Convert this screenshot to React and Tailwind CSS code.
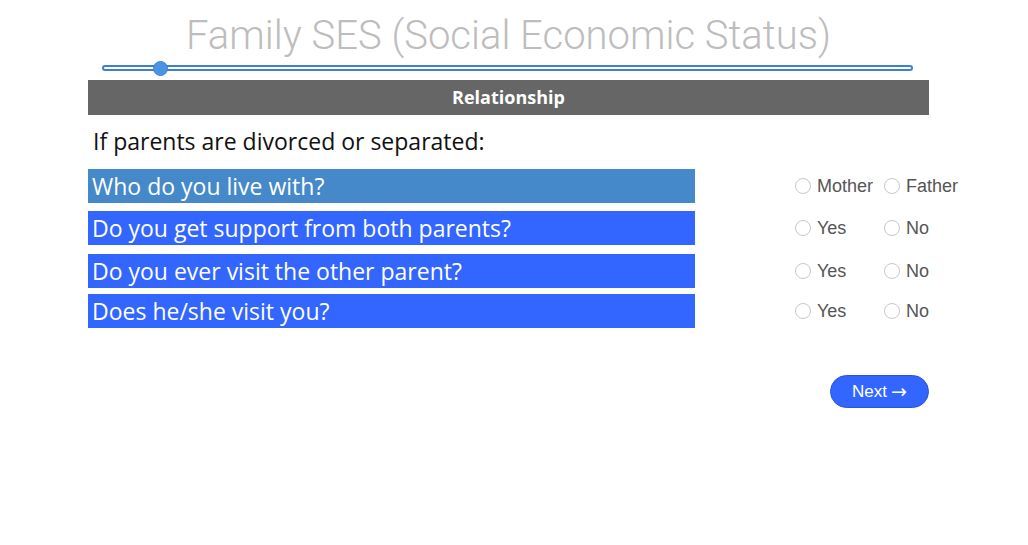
import React from "react";

const questions = [
  { q: "Who do you live with?", opts: ["Mother", "Father"], bg: "bg-[#4589cb]", mt: "" },
  { q: "Do you get support from both parents?", opts: ["Yes", "No"], bg: "bg-[#3366ff]", mt: "mt-[8px]" },
  { q: "Do you ever visit the other parent?", opts: ["Yes", "No"], bg: "bg-[#3366ff]", mt: "mt-[9px]" },
  { q: "Does he/she visit you?", opts: ["Yes", "No"], bg: "bg-[#3366ff]", mt: "mt-[6px]" },
];

function Radio({ label, w }) {
  return (
    <label className={`flex items-center gap-[6px] shrink-0 ${w}`}>
      <span className="w-[16px] h-[16px] rounded-full border border-[#c8c8c8] bg-white shrink-0" />
      <span className="text-[18px] leading-[20px] text-[#555555] font-['Liberation_Sans',Arial,sans-serif]">{label}</span>
    </label>
  );
}

export default function App() {
  return (
    <div className="w-[1028px] h-[545px] bg-white">
      <div className="ml-[88px] w-[841px] flex flex-col">
        <h1 className="mt-[11px] text-center text-[40px] leading-[50px] font-light text-[#bdbdbd] font-['Roboto',sans-serif]">
          Family SES (Social Economic Status)
        </h1>
        <div className="relative w-[811px] h-[6px] mt-[4px] ml-[14px] rounded-full border-2 border-[#3d80d0] bg-white">
          <span className="absolute left-[49px] top-[-6px] w-[15px] h-[15px] rounded-full bg-[#4c93e6] border border-[#3d80d0]" />
        </div>
        <div className="mt-[9px] w-[841px] h-[35px] bg-[#666666] flex items-center justify-center">
          <span className="text-white font-bold text-[18px] font-['Open_Sans',sans-serif]">Relationship</span>
        </div>
        <p className="mt-[11px] ml-[5px] text-[23px] leading-[30px] text-[#111] font-['Open_Sans',sans-serif]">
          If parents are divorced or separated:
        </p>
        <div className="mt-[13px] flex flex-col">
          {questions.map((item, i) => (
            <div key={i} className={`flex items-center ${item.mt}`}>
              <div className={`w-[607px] h-[34px] shrink-0 ${item.bg} flex items-center pl-[4px]`}>
                <span className="text-white text-[23px] font-['Open_Sans',sans-serif]">{item.q}</span>
              </div>
              <div className="ml-[100px] flex items-center">
                <Radio label={item.opts[0]} w="w-[89px]" />
                <Radio label={item.opts[1]} w="" />
              </div>
            </div>
          ))}
        </div>
        <div className="mt-[47px] flex justify-end">
          <button className="w-[99px] h-[33px] rounded-full bg-[#3366ff] border border-[#2a55d6] text-white text-[17px] font-['Liberation_Sans',Arial,sans-serif] flex items-center justify-center gap-[4px]">
            <span>Next</span>
            <span className="font-['DejaVu_Sans',sans-serif] text-[19px] leading-none">→</span>
          </button>
        </div>
      </div>
    </div>
  );
}
